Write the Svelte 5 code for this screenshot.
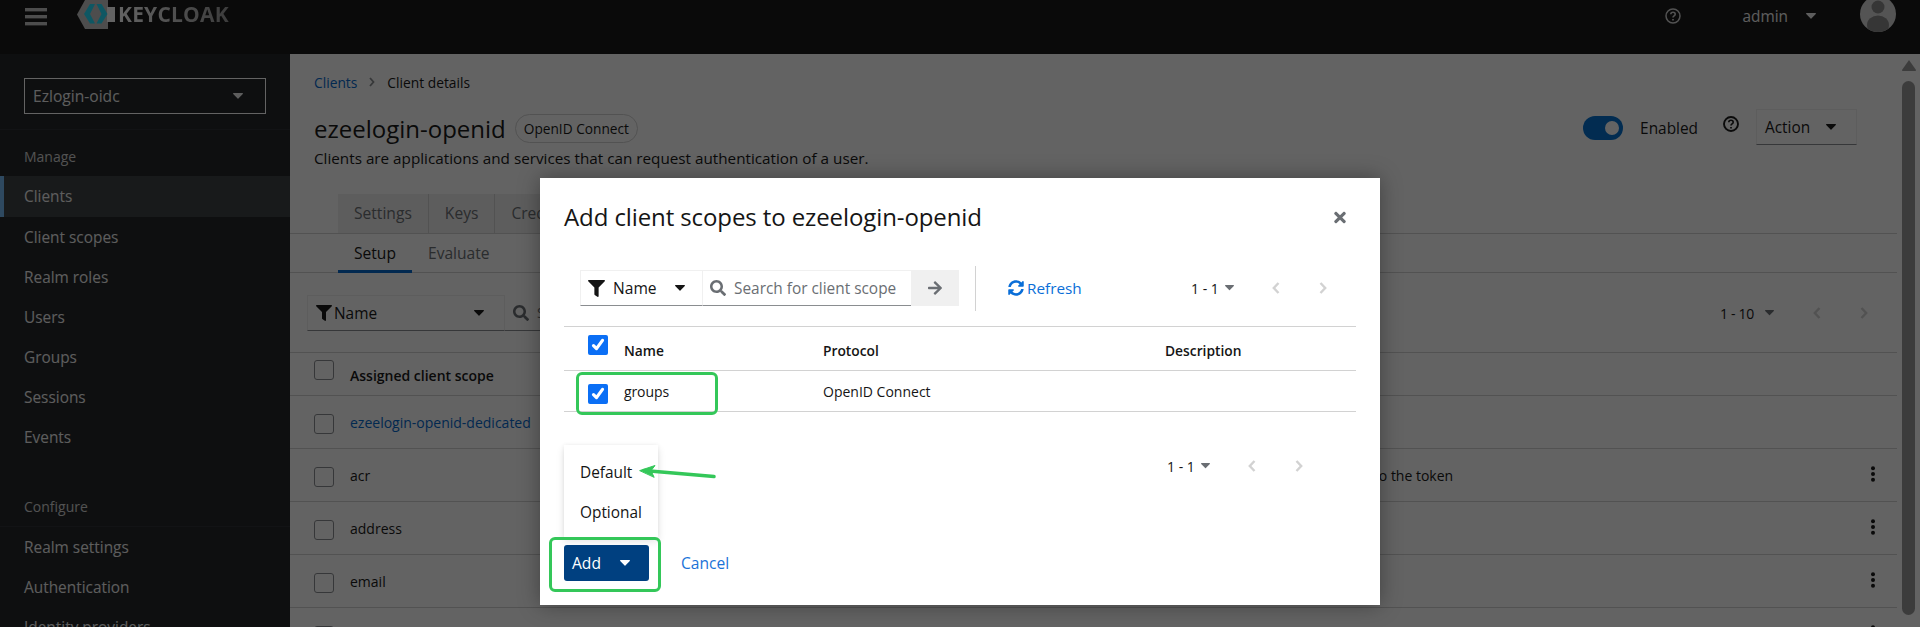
<script>
  const nav1 = ['Clients', 'Client scopes', 'Realm roles', 'Users', 'Groups', 'Sessions', 'Events'];
  const nav2 = ['Realm settings', 'Authentication', 'Identity providers'];
  const rows = [
    { name: 'ezeelogin-openid-dedicated', h: 53, link: true, kebab: false, desc: '' },
    { name: 'acr', h: 53, kebab: true, desc: 'OpenID Connect scope for add acr (authentication context class reference) to the token' },
    { name: 'address', h: 53, kebab: true, desc: '' },
    { name: 'email', h: 53, kebab: true, desc: '' },
    { name: '', h: 53, kebab: true, desc: '' }
  ];
  const filter = 'M487.976 0H24.028C2.71 0-8.047 25.866 7.058 40.971L192 225.941V432c0 7.831 3.821 15.17 10.237 19.662l80 55.98C298.02 518.69 320 507.493 320 487.98V225.941l184.947-184.97C520.021 25.896 509.338 0 487.976 0z';
  const search = 'M505 442.7L405.3 343c-4.5-4.5-10.6-7-17-7H372c27.6-35.3 44-79.7 44-128C416 93.1 322.9 0 208 0S0 93.1 0 208s93.1 208 208 208c48.3 0 92.7-16.4 128-44v16.3c0 6.4 2.5 12.5 7 17l99.7 99.7c9.4 9.4 24.6 9.4 33.9 0l28.3-28.3c9.4-9.4 9.4-24.6.1-34zM208 336c-70.7 0-128-57.2-128-128 0-70.7 57.2-128 128-128 70.7 0 128 57.2 128 128 0 70.7-57.2 128-128 128z';
  const sync = 'M370.72 133.28C339.458 104.008 298.888 87.962 255.848 88c-77.458.068-144.328 53.178-162.791 126.85-1.344 5.363-6.122 9.15-11.651 9.15H24.103c-7.498 0-13.194-6.807-11.807-14.176C33.933 94.924 134.813 8 256 8c66.448 0 126.791 26.136 171.315 68.685L463.03 40.97C478.149 25.851 504 36.559 504 57.941V192c0 13.255-10.745 24-24 24H345.941c-21.382 0-32.09-25.851-16.971-40.971l41.75-41.749zM32 296h134.059c21.382 0 32.09 25.851 16.971 40.971l-41.75 41.75c31.262 29.273 71.835 45.319 114.876 45.28 77.418-.07 144.315-53.144 162.787-126.849 1.344-5.363 6.122-9.15 11.651-9.15h57.304c7.498 0 13.194 6.807 11.807 14.176C478.067 417.076 377.187 504 256 504c-66.448 0-126.791-26.136-171.315-68.685L48.97 471.03C33.851 486.149 8 475.441 8 454.059V320c0-13.255 10.745-24 24-24z';
  const arrow = 'M190.5 66.9l22.2-22.2c9.4-9.4 24.6-9.4 33.9 0L441 239c9.4 9.4 9.4 24.6 0 33.9L246.6 467.3c-9.4 9.4-24.6 9.4-33.9 0l-22.2-22.2c-9.5-9.5-9.3-25 .4-34.3L311.4 296H24c-13.3 0-24-10.7-24-24v-32c0-13.3 10.7-24 24-24h287.4L190.9 101.2c-9.8-9.3-10-24.8-.4-34.3z';
  const times = 'M242.72 256l100.07-100.07c12.28-12.28 12.28-32.19 0-44.48l-22.24-22.24c-12.28-12.28-32.19-12.28-44.48 0L176 189.28 75.93 89.21c-12.28-12.28-32.19-12.28-44.48 0L9.21 111.45c-12.28 12.28-12.28 32.19 0 44.48L109.28 256 9.21 356.07c-12.28 12.28-12.28 32.19 0 44.48l22.24 22.24c12.28 12.28 32.2 12.28 44.48 0L176 322.72l100.07 100.07c12.28 12.28 32.2 12.28 44.48 0l22.24-22.24c12.28-12.28 12.28-32.19 0-44.48L242.72 256z';
</script>

{#snippet caret(w, color)}
  <svg class="ic" width={w} height={w * 0.6} viewBox="0 0 10 6" fill={color}><path d="M0.6 0h8.8c.5 0 .8.6.4 1L5.4 5.6c-.2.3-.6.3-.8 0L.2 1C-.2.6.1 0 .6 0z"/></svg>
{/snippet}
{#snippet fa(d, vb, w, h, color)}
  <svg class="ic" width={w} height={h} viewBox="0 0 {vb} 512" fill={color}><path {d}/></svg>
{/snippet}
{#snippet help(size, color, sw)}
  <svg class="ic" width={size} height={size} viewBox="0 0 16 16" fill="none" stroke={color} stroke-width={sw}>
    <circle cx="8" cy="8" r="7"/>
    <path d="M5.8 6.3c0-1.2 1-2 2.2-2s2.2.8 2.2 1.9c0 1.6-2.2 1.6-2.2 3.2" stroke-width="1.6"/>
    <path d="M8 11v1.6" stroke-width="1.7"/>
  </svg>
{/snippet}
{#snippet check()}
  <span class="cb on">
    <svg width="14" height="14" viewBox="0 0 14 14" fill="none" stroke="#fff" stroke-width="3.2" stroke-linecap="round" stroke-linejoin="round"><path d="M2.500 7.600l3 3 6-8.200"/></svg>
  </span>
{/snippet}
{#snippet chevrons(gap)}
  <span class="chev" style="gap:{gap}px">
    <svg width="8" height="12" viewBox="0 0 8 12" fill="none" stroke="#d2d2d2" stroke-width="2.400"><path d="M6.500 1L1.800 6l4.700 5"/></svg>
    <svg width="8" height="12" viewBox="0 0 8 12" fill="none" stroke="#d2d2d2" stroke-width="2.400"><path d="M1.500 1l4.700 5-4.700 5"/></svg>
  </span>
{/snippet}

<div class="page">
  <header class="top">
    <svg class="burger" width="22" height="18" viewBox="0 0 22 18" fill="#c4c4c4"><rect width="22" height="3.400" y="0"/><rect width="22" height="3.400" y="7"/><rect width="22" height="3.400" y="14"/></svg>
    <div class="logo">
      <svg width="38" height="29" viewBox="0 0 38 29">
        <path d="M0 14.500L8 0h23v29H8z" fill="#c4c4c4"/>
        <rect x="30" y="7" width="8" height="15" fill="#fff"/>
        <path d="M13 4L7 14 13 23.500h5L13 14l5-10z" fill="#20e0ff"/>
        <path d="M24.500 4l6 10-6 9.500h-5l5-9.500-5-10z" fill="#20e0ff"/>
      </svg>
      <span class="logotext">KEYCLOAK</span>
    </div>
    <div class="topright">
      <span class="tophelp">{@render help(16, '#d2d2d2', 1.5)}</span>
      <span class="user">admin</span>
      <span class="usercaret">{@render caret(10, '#f0f0f0')}</span>
      <svg class="avatar" width="36" height="36" viewBox="0 0 36 36">
        <defs><clipPath id="ac"><circle cx="18" cy="18" r="18"/></clipPath></defs>
        <g clip-path="url(#ac)"><rect width="36" height="36" fill="#d8d8d8"/><circle cx="18" cy="11" r="6.500" fill="#8a8a8a"/><ellipse cx="18" cy="29" rx="11" ry="9.500" fill="#8a8a8a"/></g>
      </svg>
    </div>
  </header>

  <div class="body">
    <aside class="side">
      <div class="realmwrap">
        <div class="realm"><span>Ezlogin-oidc</span>{@render caret(10, '#f0f0f0')}</div>
      </div>
      <div class="group">Manage</div>
      <nav>
        {#each nav1 as n, i}
          <div class="nav" class:cur={i === 0}>{n}</div>
        {/each}
      </nav>
      <div class="group g2">Configure</div>
      <nav class="nav2">
        {#each nav2 as n}
          <div class="nav">{n}</div>
        {/each}
      </nav>
    </aside>

    <main class="main">
      <div class="content">
        <div class="crumb"><span class="link">Clients</span><svg width="6" height="10" viewBox="0 0 6 10" fill="none" stroke="#8a8d90" stroke-width="1.800"><path d="M1 1l3.500 4L1 9"/></svg><span>Client details</span></div>
        <div class="titlebar">
          <h1>ezeelogin-openid</h1>
          <span class="badge">OpenID Connect</span>
          <div class="titleright">
            <span class="toggle"><i></i></span>
            <span class="enabled">Enabled</span>
            <span class="thelp">{@render help(16, '#151515', 1.9)}</span>
            <div class="action"><span>Action</span>{@render caret(10, '#151515')}</div>
          </div>
        </div>
        <p class="sub">Clients are applications and services that can request authentication of a user.</p>
        <div class="tabs">
          <span class="tab">Settings</span><span class="tab">Keys</span><span class="tab">Credentials</span>
        </div>
        <div class="subtabs"><span class="st on">Setup</span><span class="st">Evaluate</span></div>
        <div class="tools">
          <div class="fsel">{@render fa(filter, 512, 16, 16, '#151515')}<span>Name</span><span class="sp"></span>{@render caret(10, '#151515')}</div>
          <div class="fsearch">{@render fa(search, 512, 16, 16, '#6a6e73')}<span>Search for client scope</span></div>
          <div class="pager">
            <span class="pc">1 - 10</span>{@render caret(9, '#6a6e73')}
            <span class="pg">{@render chevrons(39)}</span>
          </div>
        </div>
        <div class="thead">
          <span class="ucb"></span><b>Assigned client scope</b>
        </div>
        {#each rows as r}
          <div class="row" style="height:{r.h}px">
            <span class="ucb"></span>
            <span class="rn" class:link={r.link}>{r.name}</span>
            {#if r.desc}<span class="rd">{r.desc}</span>{/if}
            {#if r.kebab}
              <svg class="kebab" width="6" height="16" viewBox="0 0 6 16" fill="#151515"><circle cx="3" cy="2.300" r="2"/><circle cx="3" cy="8" r="2"/><circle cx="3" cy="13.700" r="2"/></svg>
            {/if}
          </div>
        {/each}
      </div>
      <div class="rail">
        <svg width="14" height="11" viewBox="0 0 14 11" fill="#9a9a9a"><path d="M7 0l7 10c0 .6-.4 1-1 1H1c-.6 0-1-.4-1-1z"/></svg>
        <div class="thumb"></div>
      </div>
    </main>
  </div>

  <div class="overlay"></div>

  <section class="modal">
    <div class="mhead">
      <h2>Add client scopes to ezeelogin-openid</h2>
      {@render fa(times, 352, 12, 17, '#6a6e73')}
    </div>
    <div class="mtools">
      <div class="mfsel">{@render fa(filter, 512, 17, 17, '#151515')}<span>Name</span><span class="sp"></span>{@render caret(10, '#151515')}</div>
      <div class="msearch">{@render fa(search, 512, 16, 16, '#6a6e73')}<span>Search for client scope</span></div>
      <div class="marrow">{@render fa(arrow, 448, 14, 16, '#6a6e73')}</div>
      <div class="vline"></div>
      <div class="refresh">{@render fa(sync, 512, 16, 16, '#0a6ed8')}<span>Refresh</span></div>
      <div class="mpager">
        <span class="pc">1 - 1</span>{@render caret(9, '#6a6e73')}
        <span class="pg">{@render chevrons(39)}</span>
      </div>
    </div>
    <div class="mtable">
      <div class="mth">
        <span class="c1 hc">{@render check()}</span>
        <b class="c2">Name</b><b class="c3">Protocol</b><b class="c4">Description</b>
      </div>
      <div class="mtr">
        <span class="c1">{@render check()}</span>
        <span class="c2">groups</span><span class="c3">OpenID Connect</span><span class="c4"></span>
      </div>
    </div>
    <div class="mpager2">
      <span class="pc">1 - 1</span>{@render caret(9, '#6a6e73')}
      <span class="pg">{@render chevrons(39)}</span>
    </div>
    <div class="mfoot">
      <button class="add"><span>Add</span>{@render caret(10, '#fff')}</button>
      <span class="cancel">Cancel</span>
    </div>
    <div class="menu">
      <div>Default</div>
      <div>Optional</div>
    </div>
  </section>

  <div class="mark m1"></div>
  <div class="mark m2"></div>
  <svg class="arrowmark" width="80" height="24" viewBox="0 0 80 24" fill="none" stroke="#34c759" stroke-width="3.500" stroke-linecap="round" stroke-linejoin="round">
    <path d="M76 14.500L6 8.500"/>
    <path d="M2 8.500L17 3.500 13 8.700 16 15z" fill="#34c759" stroke-width="1"/>
  </svg>
</div>

<style>
  :global(body) { margin: 0; overflow: hidden; }
  .page {
    position: relative; width: 1920px; height: 627px; overflow: hidden; background: #fff;
    font-family: "Open Sans", "Noto Sans", sans-serif; font-size: 14px; color: #151515;
  }
  .ic { display: block; flex: none; }
  .sp { flex: 1; }
  .link { color: #06c; }

  .top { height: 54px; background: #151515; display: flex; align-items: flex-start; }
  .burger { margin: 8px 0 0 25px; }
  .logo { display: flex; align-items: flex-start; margin-left: 30px; height: 29px; }
  .logotext {
    font-family: "Open Sans", sans-serif; font-weight: 700; font-size: 21px; line-height: 29px; margin-left: 3px; letter-spacing: .2px;
    background: linear-gradient(90deg, #fff, #9a9a9a); -webkit-background-clip: text; background-clip: text; color: transparent;
  }
  .topright { margin-left: auto; display: flex; align-items: center; height: 32px; }
  .tophelp { margin-right: 61px; }
  .user { font-size: 15.4px; color: #f0f0f0; }
  .usercaret { margin: 0 44px 0 18px; }
  .avatar { margin: -4px 24px 0 0; }

  .body { display: flex; height: 573px; }
  .side { width: 290px; flex: none; background: #212427; color: #f0f0f0; overflow: hidden; }
  .realmwrap { height: 76px; padding: 24px 24px 0; box-sizing: border-box; border-bottom: 1px solid #2c2f33; }
  .realm { height: 36px; border: 1px solid #fff; box-sizing: border-box; display: flex; align-items: center; justify-content: space-between; padding: 0 22px 0 8px; font-size: 15.6px; }
  .group { height: 46px; padding: 16px 0 0 24px; box-sizing: border-box; font-size: 14px; color: #d2d2d2; line-height: 22px; }
  .nav { height: 40px; line-height: 42px; padding-left: 24px; font-size: 15.4px; }
  .nav.cur { height: 41px; border-left: 4px solid #73bcf7; padding-left: 20px; box-sizing: border-box; background: #3c3f42; }
  .group.g2 { height: 70px; padding-top: 39px; border-bottom: 1px solid #2c2f33; }

  .main { flex: 1; display: flex; min-width: 0; }
  .content { flex: 1; min-width: 0; overflow: hidden; }
  .crumb { height: 56px; display: flex; align-items: center; gap: 12px; padding-left: 24px; box-sizing: border-box; font-size: 13.8px; }
  .titlebar { height: 36px; display: flex; align-items: center; padding-left: 24px; }
  h1 { margin: 0; font-size: 24px; font-weight: 400; }
  .badge { margin-left: 9px; height: 29px; line-height: 27px; border: 1px solid #d2d2d2; border-radius: 15px; padding: 0 8px; box-sizing: border-box; font-size: 13.7px; }
  .titleright { margin-left: auto; display: flex; align-items: center; padding-right: 40px; }
  .toggle { width: 40px; height: 24px; background: #0070d0; border-radius: 12px; position: relative; }
  .toggle i { position: absolute; right: 4px; top: 5px; width: 14px; height: 14px; border-radius: 50%; background: #fff; }
  .enabled { margin-left: 17px; font-size: 15.4px; }
  .thelp { margin: -8px 0 0 25px; }
  .action { width: 101px; height: 36px; box-sizing: border-box; margin-left: 17px; border: 1px solid #f0f0f0; border-bottom-color: #8a8d90; display: flex; align-items: center; justify-content: space-between; padding: 0 20px 0 8px; font-size: 15.4px; margin-top: -2px; }
  .sub { margin: 0; height: 24px; line-height: 24px; padding-left: 24px; font-size: 15.25px; }
  .tabs { margin-top: 24px; height: 39px; padding-left: 48px; border-bottom: 1px solid #d2d2d2; display: flex; }
  .tab { padding: 0 16px; line-height: 39px; background: #f0f0f0; border-right: 1px solid #d2d2d2; color: #6a6e73; font-size: 15.6px; }
  .subtabs { height: 39px; box-sizing: border-box; padding-left: 48px; border-bottom: 1px solid #d2d2d2; display: flex; font-size: 15.6px; color: #6a6e73; }
  .st { padding: 0 16px; line-height: 39px; height: 39px; box-sizing: border-box; }
  .st.on { color: #151515; border-bottom: 3px solid #06c; }
  .tools { margin: 22px 0 0 17px; height: 36px; display: flex; align-items: center; position: relative; }
  .fsel { width: 198px; height: 36px; box-sizing: border-box; display: flex; align-items: center; gap: 2px; padding: 0 20px 0 8px; border: 1px solid #f0f0f0; border-bottom-color: #8a8d90; font-size: 15.4px; }
  .fsearch { width: 300px; height: 36px; box-sizing: border-box; display: flex; align-items: center; gap: 8px; padding-left: 8px; border-bottom: 1px solid #8a8d90; color: #6a6e73; }
  .pager { position: absolute; right: 29px; top: 0; height: 36px; display: flex; align-items: center; gap: 11px; }
  .pager .pc { letter-spacing: -.3px; }
  .pager .pg { margin-left: 28px; }
  .pg { margin-left: 28px; }
  .chev { display: flex; }
  .thead { height: 42px; margin-top: 21px; border-top: 1px solid #d2d2d2; padding-left: 24px; display: flex; }
  .thead .ucb { margin-top: 7px; }
  .thead b { margin: 13px 0 0 16px; font-weight: 600; line-height: 20px; }
  .ucb { width: 20px; height: 20px; border: 1px solid #8a8d90; border-radius: 3px; box-sizing: border-box; background: #fff; flex: none; }
  .row { border-top: 1px solid #d2d2d2; display: flex; align-items: center; padding-left: 24px; box-sizing: border-box; position: relative; }
  .row .ucb { margin-top: 4px; }
  .rn { margin-left: 16px; width: 300px; }
  .rd { position: absolute; left: 595px; top: 17px; white-space: nowrap; }
  .kebab { position: absolute; right: 21px; top: 17px; }

  .rail { width: 23px; flex: none; padding: 6px 0 0 5px; box-sizing: border-box; }
  .rail svg { display: block; }
  .thumb { width: 13px; height: 534px; background: #9a9a9a; border-radius: 7px; margin-top: 10px; }

  .overlay { position: absolute; inset: 0; background: rgba(3, 3, 3, .62); }

  .modal { position: absolute; left: 540px; top: 178px; width: 840px; height: 427px; background: #fff; box-shadow: 0 0 20px rgba(3,3,3,.35); box-sizing: border-box; padding: 24px; }
  .mhead { display: flex; align-items: center; justify-content: space-between; height: 30px; padding-right: 10px; }
  h2 { margin: 0; font-size: 24px; font-weight: 400; line-height: 30px; letter-spacing: -.1px; }
  .mtools { margin: 38px 0 0 16px; height: 36px; display: flex; align-items: center; position: relative; }
  .mfsel { width: 123px; height: 36px; box-sizing: border-box; display: flex; align-items: center; gap: 8px; padding: 0 17px 0 7px; border: 1px solid #f0f0f0; border-bottom-color: #8a8d90; font-size: 15.6px; color: #151515; }
  .msearch { width: 208px; height: 36px; box-sizing: border-box; display: flex; align-items: center; gap: 8px; padding-left: 7px; border-top: 1px solid #f0f0f0; border-bottom: 1px solid #8a8d90; color: #6a6e73; font-size: 15.4px; white-space: nowrap; overflow: hidden; }
  .marrow { width: 48px; height: 36px; background: #f0f0f0; display: flex; align-items: center; justify-content: center; }
  .vline { width: 1px; height: 45px; background: #d2d2d2; margin-left: 16px; }
  .refresh { margin-left: 32px; display: flex; align-items: center; gap: 3px; color: #0a6ed8; font-size: 15.3px; line-height: 20px; margin-top: -1px; }
  .mpager { position: absolute; left: 611px; top: 0; height: 36px; display: flex; align-items: center; gap: 10px; }
  .mpager .pc, .mpager2 .pc { width: 24px; white-space: nowrap; }
  .mtable { margin-top: 20px; border-top: 1px solid #d2d2d2; }
  .mth, .mtr { display: grid; grid-template-columns: 60px 199px 342px 1fr; align-items: center; border-bottom: 1px solid #d2d2d2; box-sizing: border-box; }
  .mth { height: 44px; font-size: 13.8px; }
  .mth b { font-weight: 600; padding-top: 4px; }
  .mtr { height: 41px; }
  .mtr .c1 { margin-top: 6px; }
  .mtr .c2, .mtr .c3 { padding-top: 1px; }
  .mtr .c2 { letter-spacing: -.1px; }
  .c1 { padding-left: 24px; display: block; }
  .hc { padding-bottom: 8px; }
  .cb { width: 20px; height: 20px; border-radius: 2px; display: flex; align-items: center; justify-content: center; }
  .cb.on { background: #0b6ff5; }
  .mpager2 { margin: 36px 0 0 603px; height: 36px; display: flex; align-items: center; gap: 10px; }
  .mfoot { margin-top: 61px; display: flex; align-items: center; }
  .add { width: 85px; height: 36px; border: 0; border-radius: 3px; background: #004080; color: #fff; font: inherit; font-size: 15.6px; display: flex; align-items: center; gap: 19px; padding: 0 0 0 8px; }
  .cancel { margin-left: 32px; color: #1a73d8; font-size: 15.6px; }
  .menu { position: absolute; left: 24px; top: 267px; width: 94px; height: 92px; background: #fff; box-shadow: 0 4px 8px rgba(3,3,3,.12), 0 0 4px rgba(3,3,3,.06); box-sizing: border-box; padding-top: 8px; font-size: 15.4px; color: #151515; }
  .menu div { height: 40px; line-height: 40px; padding-left: 16px; }

  .mark { position: absolute; border: 3px solid #34c759; border-radius: 6px; box-sizing: border-box; }
  .m1 { left: 576px; top: 372px; width: 142px; height: 43px; }
  .m2 { left: 549px; top: 537px; width: 112px; height: 55px; }
  .arrowmark { position: absolute; left: 638px; top: 462px; }
</style>
